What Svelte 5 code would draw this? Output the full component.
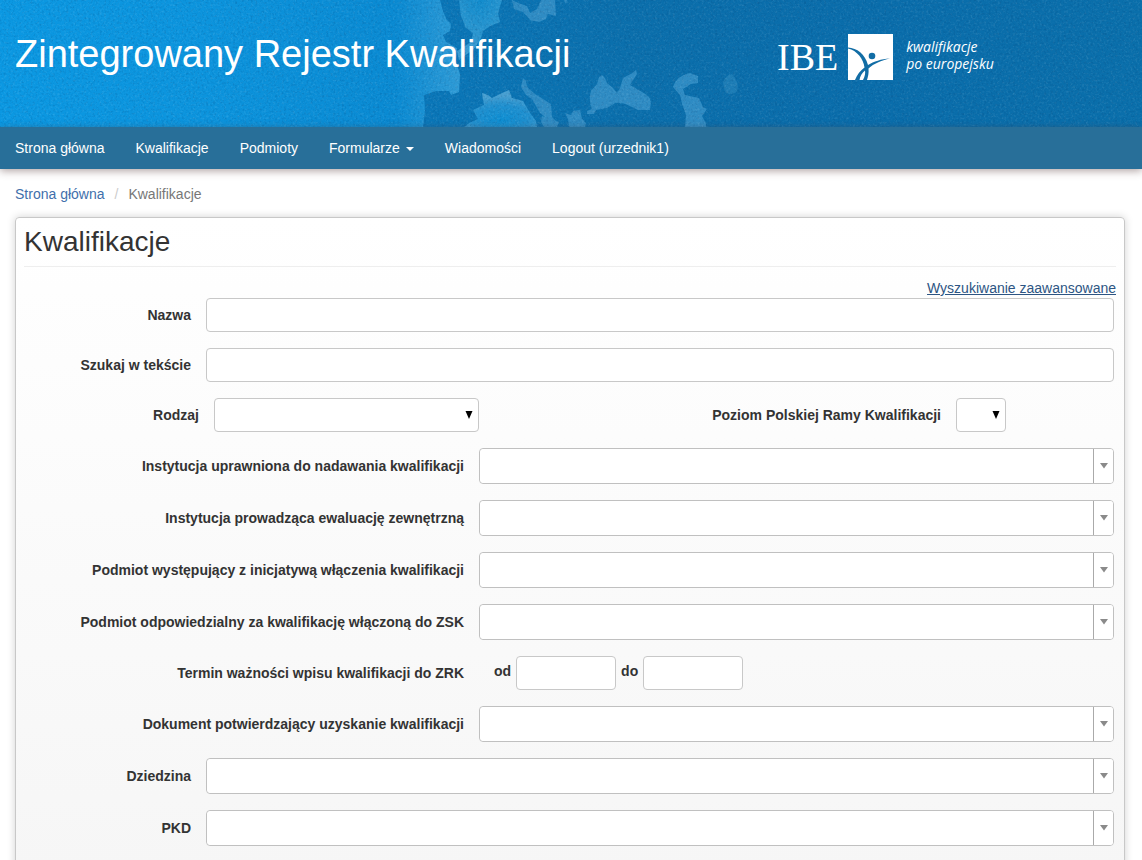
<script>
  const nav = ['Strona główna', 'Kwalifikacje', 'Podmioty', 'Formularze', 'Wiadomości', 'Logout (urzednik1)'];
  const institutions = [
    { id: 'nadawanie', label: 'Instytucja uprawniona do nadawania kwalifikacji' },
    { id: 'ewaluacja', label: 'Instytucja prowadząca ewaluację zewnętrzną' },
    { id: 'inicjatywa', label: 'Podmiot występujący z inicjatywą włączenia kwalifikacji' },
    { id: 'odpowiedzialny', label: 'Podmiot odpowiedzialny za kwalifikację włączoną do ZSK' }
  ];
</script>

{#snippet combo(id, label, wide)}
  <div class="row" class:wide>
    <label for={id}>{label}</label>
    <div class="combo">
      <input {id} type="text" />
      <button type="button" aria-label="Rozwiń: {label}">
        <svg width="8" height="6" viewBox="0 0 8 6"><path d="M0 0h8L4 5.5z" fill="#8a8a8a" /></svg>
      </button>
    </div>
  </div>
{/snippet}

<header class="banner">
  <svg class="map" viewBox="0 0 1142 127" preserveAspectRatio="xMinYMid slice" aria-hidden="true">
    <defs>
      <linearGradient id="land" gradientUnits="userSpaceOnUse" x1="0" y1="0" x2="1142" y2="0">
        <stop offset="0" stop-color="#0b98e2" />
        <stop offset="0.16" stop-color="#0c95de" />
        <stop offset="0.28" stop-color="#0c8bd2" />
        <stop offset="0.37" stop-color="#0a77b9" />
        <stop offset="0.55" stop-color="#0b6fac" />
        <stop offset="0.75" stop-color="#0a6dab" />
        <stop offset="1" stop-color="#0a6fab" />
      </linearGradient>
      <linearGradient id="ocean" gradientUnits="userSpaceOnUse" x1="0" y1="0" x2="460" y2="0">
        <stop offset="0" stop-color="#0b98e2" />
        <stop offset="0.45" stop-color="#0c94dd" />
        <stop offset="0.86" stop-color="#0a8ad2" />
        <stop offset="1" stop-color="#2f9bd6" />
      </linearGradient>
      <radialGradient id="med" cx="0.5" cy="0.8" r="0.65">
        <stop offset="0" stop-color="#0e8fd3" />
        <stop offset="0.6" stop-color="#2090cf" />
        <stop offset="1" stop-color="#479fd1" />
      </radialGradient>
      <radialGradient id="north" cx="0.5" cy="0" r="0.85">
        <stop offset="0" stop-color="#118ccd" />
        <stop offset="1" stop-color="#389bd1" />
      </radialGradient>
      <filter id="paper" x="0" y="0" width="100%" height="100%" color-interpolation-filters="sRGB">
        <feTurbulence type="fractalNoise" baseFrequency="0.45" numOctaves="2" seed="7" />
        <feColorMatrix values="0 0 0 0 1  0 0 0 0 1  0 0 0 0 1  0.8 0 0 0 -0.4" />
      </filter>
      <filter id="grain" x="0" y="0" width="100%" height="100%" color-interpolation-filters="sRGB">
        <feTurbulence type="fractalNoise" baseFrequency="0.45" numOctaves="2" seed="19" />
        <feColorMatrix values="0 0 0 0 0  0 0 0 0 0.2  0 0 0 0 0.4  1 0 0 0 -0.5" />
      </filter>
    </defs>
    <rect width="1142" height="127" fill="url(#land)" />
    <path fill="url(#ocean)" d="M0 0H440L443 11 446 19 451 24 450 31 443 35 446 42 457 48 456 62 460 74 459 92 451 95 449 91 436 91 424 95 425 110 423 127H0z" />
    <path fill="url(#north)" d="M459 0L461 16 466 28 473 33 471 42 457 51 459 60 474 49 481 38 483 31 490 26 500 22 498 13 502 0z" />
    <g fill="#2f8cc4">
      <path d="M512 0L514 9 523 12 530 20 539 22 546 19 548 14 556 16 555 0H541L537 9 530 13 527 6 518 3z" />
      <path d="M564 0l2 4 1-4z" />
      <path d="M523 78l3 3 1 6 8 7 16 10 1 13-3 3-9-7-8-14-6-4-5-8z" />
      <path d="M542 116l5 2 5-1 4 4 3 1-2 5H544l-3-5z" />
      <path d="M565 113l6 2 2-4 7-1 2 9 4 4-1 4h-16l-1-8z" />
      <path d="M602 75L605 78 607 83 613 88 617 93 620 88 623 78 631 74 636 70 637 74 630 85 642 92Q650 96 651 102L650 110 638 110 630 106Q622 102 615 103L607 108 596 110 594 114 587 114 587 111 592 109Q588 100 591 91L597 84 599 77z" />
      <path d="M673 87Q676 76 690 73L698 76 698 83 691 84 683 89 685 95 699 98 703 107 707 109 702 116 706 124V127H685L686 115 682 104 680 95z" />
    </g>
    <path fill="#1d7db6" d="M723 83Q725 75 732 74Q740 83 737 91Q732 97 725 92z" />
    <path fill="url(#med)" d="M465 127L469 123 478 119 473 110 484 105 482 93 488 95 492 98 502 93 509 90 512 98 523 101 530 113 536 121 537 127z" />
    <rect width="1142" height="127" filter="url(#paper)" opacity="0.35" />
    <rect width="1142" height="127" filter="url(#grain)" opacity="0.5" />
  </svg>
  <div class="masthead">
    <h1>Zintegrowany Rejestr Kwalifikacji</h1>
    <div class="logo">
      <span class="ibe">IBE</span>
      <svg width="45" height="46" viewBox="0 0 45 46" aria-hidden="true">
        <path fill="#fff" d="M0 0h45v46H0z" />
        <g fill="#126da5">
          <circle cx="24" cy="22" r="3.3" />
          <path d="M0 13.500C9 14 17 20 20 31C26 27.500 33 25 42 24.500C33 26.500 26 29.500 20.500 34.500C21 39 20 43 19 46H15C17 42 17.500 39 17 36.500C14 39 12 42 11.500 46H7C9 40.500 12.500 36.500 16.500 33.500C15.500 25 9 16.500 0 14.500z" />
        </g>
      </svg>
      <span class="slogan">kwalifikacje<br />po europejsku</span>
    </div>
  </div>
</header>

<nav class="navbar">
  {#each nav as item}
    <a href="#top">{item}{#if item === 'Formularze'}<span class="caret"></span>{/if}</a>
  {/each}
</nav>

<main>
  <div class="breadcrumb">
    <a href="#top">Strona główna</a><span class="slash">/</span><span>Kwalifikacje</span>
  </div>

  <section class="panel">
    <h2>Kwalifikacje</h2>
    <div class="advanced"><a href="#top">Wyszukiwanie zaawansowane</a></div>
    <form>
      <div class="row wide">
        <label for="nazwa">Nazwa</label>
        <input id="nazwa" type="text" />
      </div>
      <div class="row wide">
        <label for="tekst">Szukaj w tekście</label>
        <input id="tekst" type="text" />
      </div>
      <div class="row pair">
        <label for="rodzaj">Rodzaj</label>
        <div class="select">
          <select id="rodzaj"><option></option></select>
          <svg width="8" height="8" viewBox="0 0 8 8" aria-hidden="true"><path d="M0.500 0h7L4 8z" /></svg>
        </div>
        <label for="poziom">Poziom Polskiej Ramy Kwalifikacji</label>
        <div class="select small">
          <select id="poziom"><option></option></select>
          <svg width="8" height="8" viewBox="0 0 8 8" aria-hidden="true"><path d="M0.500 0h7L4 8z" /></svg>
        </div>
      </div>
      {#each institutions as f}
        {@render combo(f.id, f.label, false)}
      {/each}
      <div class="row">
        <label for="od">Termin ważności wpisu kwalifikacji do ZRK</label>
        <div class="dates">
          <label for="od">od</label>
          <input id="od" type="text" />
          <label for="do">do</label>
          <input id="do" type="text" />
        </div>
      </div>
      {@render combo('dokument', 'Dokument potwierdzający uzyskanie kwalifikacji', false)}
      {@render combo('dziedzina', 'Dziedzina', true)}
      {@render combo('pkd', 'PKD', true)}
    </form>
  </section>
</main>

<style>
  :global(body) {
    margin: 0;
    background: #fff;
    color: #333;
    font: 14px/20px "Liberation Sans", Arial, sans-serif;
  }
  .banner {
    display: grid;
    background: #0b6fac;
  }
  .map,
  .masthead {
    grid-area: 1 / 1;
  }
  .map {
    width: 100%;
    height: 127px;
  }
  .masthead {
    z-index: 1;
    display: grid;
    grid-template-columns: 762fr 350fr;
    align-items: start;
    padding: 30px 15px 0;
  }
  h1 {
    margin: 0;
    color: #fff;
    font-size: 38px;
    font-weight: 400;
    line-height: 48px;
    white-space: nowrap;
  }
  .logo {
    display: flex;
    align-items: center;
    padding-top: 4px;
    color: #fff;
  }
  .logo svg {
    flex: none;
    margin: 0 13px 0 10px;
  }
  .ibe {
    font: 38px/46px "Liberation Serif", serif;
  }
  .slogan {
    padding-bottom: 4px;
    font: italic 14px/17px "Open Sans", sans-serif;
    white-space: nowrap;
  }
  .navbar {
    position: relative;
    display: flex;
    flex-wrap: wrap;
    column-gap: 1px;
    background: #286f99;
    box-shadow: 0 2px 8px rgba(80, 50, 50, 0.45);
  }
  .navbar a {
    padding: 11px 15px;
    color: #fff;
    text-decoration: none;
  }
  .caret {
    display: inline-block;
    margin-left: 6px;
    vertical-align: middle;
    border: 4px solid transparent;
    border-top-color: #fff;
    border-bottom: 0;
  }
  main {
    padding: 15px 17px 0 15px;
  }
  .breadcrumb {
    display: flex;
    margin-bottom: 13px;
    color: #777;
  }
  .breadcrumb a {
    color: #416fab;
    text-decoration: none;
  }
  .slash {
    padding: 0 10px;
    color: #ccc;
  }
  .panel {
    padding: 4px 8px 24px;
    border: 1px solid #c8c8c8;
    border-radius: 4px;
    background: linear-gradient(#fff, #f6f6f6);
    box-shadow: 0 0 8px rgba(0, 0, 0, 0.18);
  }
  h2 {
    margin: 0 0 11px;
    padding-bottom: 4px;
    border-bottom: 1px solid #eee;
    font-size: 28px;
    font-weight: 400;
    line-height: 40px;
  }
  .advanced {
    text-align: right;
  }
  .advanced a {
    color: #2d5583;
  }
  form {
    display: grid;
    gap: 16px;
    padding-right: 2px;
  }
  .row {
    display: grid;
    grid-template-columns: 455fr 635fr;
    align-items: center;
  }
  .row.wide {
    grid-template-columns: 182fr 908fr;
  }
  .row.pair {
    grid-template-columns: 190fr 265fr 477fr 158fr;
  }
  label {
    padding-right: 15px;
    font-weight: 700;
    text-align: right;
  }
  input,
  select {
    box-sizing: border-box;
    width: 100%;
    min-width: 0;
    height: 34px;
    margin: 0;
    padding: 6px 12px;
    border: 1px solid #c8c8c8;
    border-radius: 4px;
    background: #fff;
    color: #555;
    font: inherit;
  }
  .select {
    display: grid;
    align-items: center;
  }
  .small {
    width: 50px;
  }
  select {
    grid-area: 1 / 1;
    appearance: none;
  }
  .select svg {
    grid-area: 1 / 1;
    justify-self: end;
    margin-right: 6px;
    pointer-events: none;
  }
  .combo {
    display: flex;
    box-sizing: border-box;
    height: 36px;
    overflow: hidden;
    border: 1px solid #c0c0c0;
    border-radius: 4px;
    background: #fff;
  }
  .combo input {
    border: 0;
  }
  .combo button {
    display: flex;
    flex: none;
    align-items: center;
    justify-content: center;
    width: 20px;
    padding: 0;
    border: 0;
    border-left: 1px solid #aaa;
    background: #fff;
  }
  .dates {
    display: flex;
    align-items: center;
    gap: 5px;
    padding-left: 15px;
  }
  .dates label {
    padding: 0 0 4px;
  }
  .dates input {
    width: 100px;
  }
</style>
